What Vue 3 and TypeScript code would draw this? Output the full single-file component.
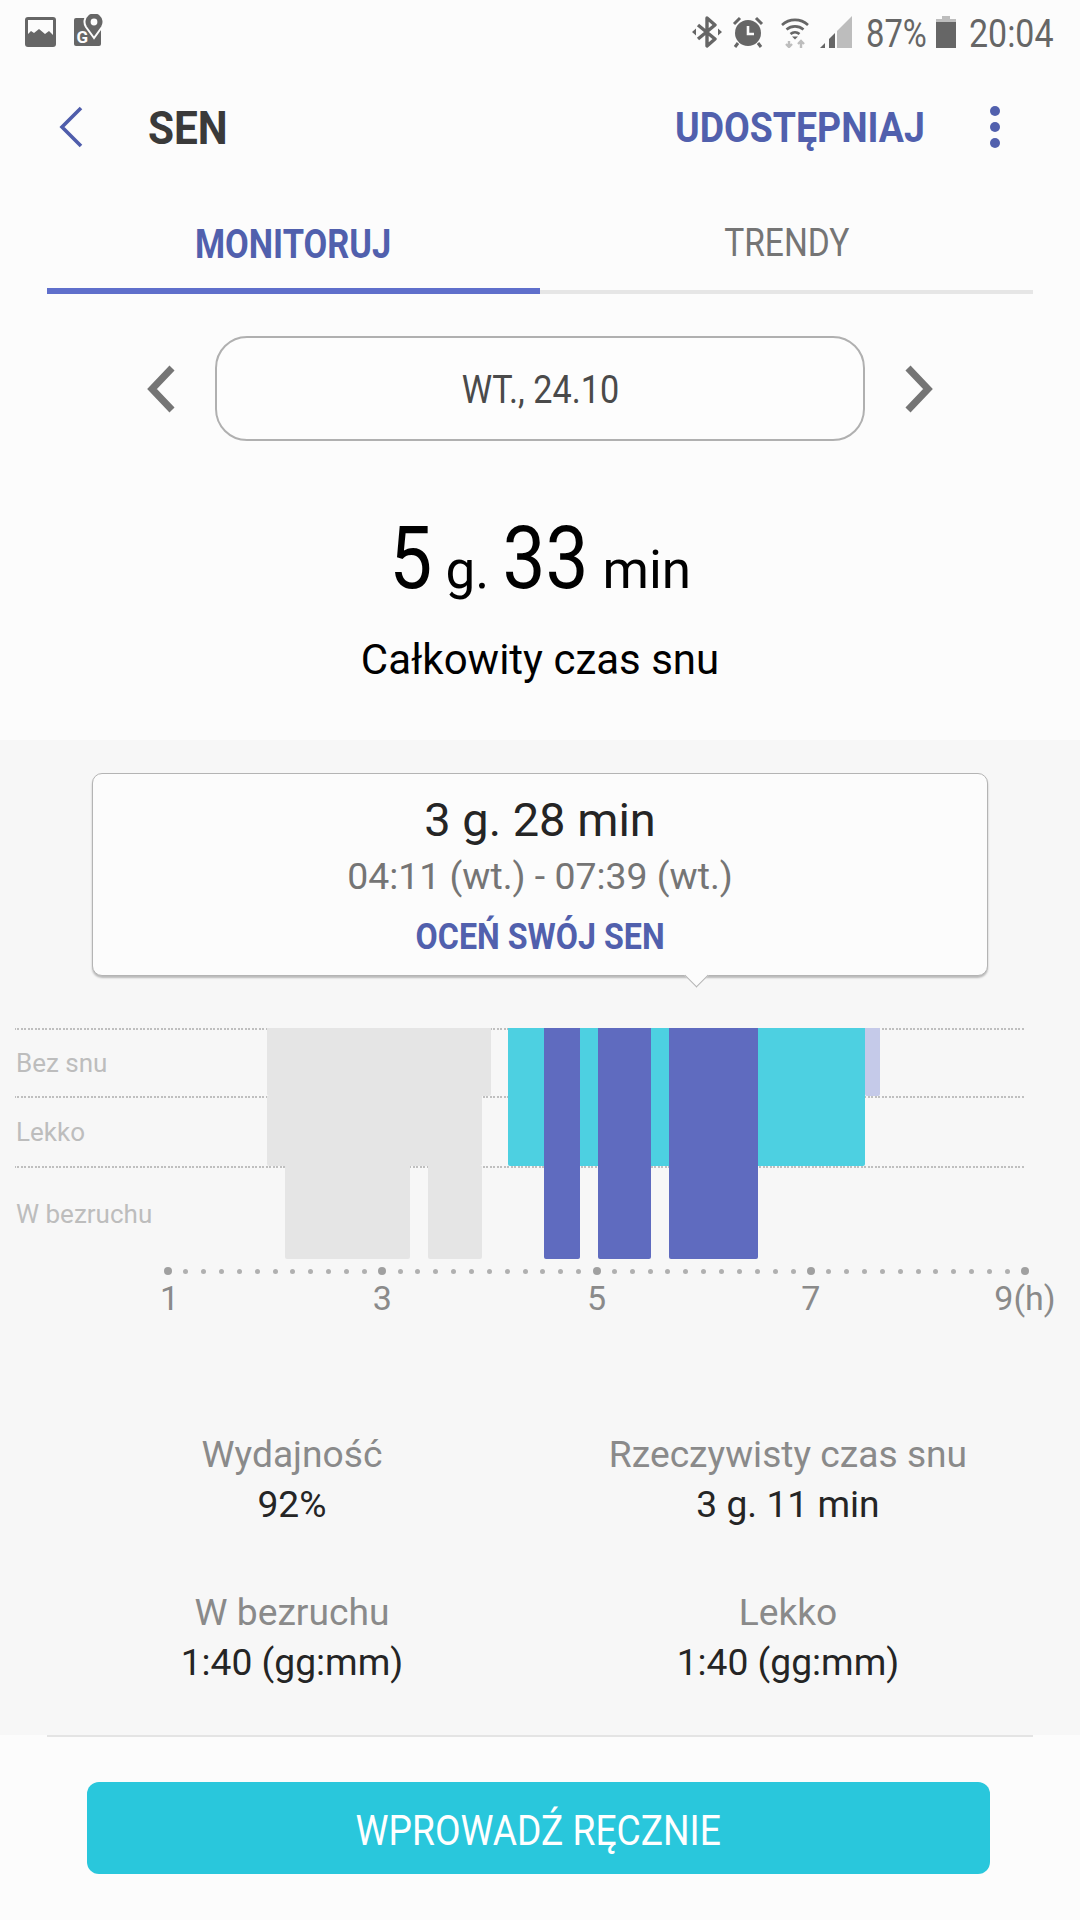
<script setup lang="ts">
interface Bar { x: number; w: number; y: number; h: number; color: string }

const grey = "#e5e5e5";
const teal = "#4dd0e1";
const indigo = "#5f6bbf";

// chart origin is x=15, y=1028 on the page
const bars: Bar[] = [
  { x: 252, w: 224, y: 0, h: 68, color: grey },
  { x: 252, w: 215, y: 68, h: 70, color: grey },
  { x: 270, w: 125, y: 138, h: 93, color: grey },
  { x: 413, w: 54, y: 138, h: 93, color: grey },
  { x: 493, w: 357, y: 0, h: 138, color: teal },
  { x: 850, w: 15, y: 0, h: 68, color: "#c5cae9" },
  { x: 529, w: 36, y: 0, h: 231, color: indigo },
  { x: 583, w: 53, y: 0, h: 231, color: indigo },
  { x: 654, w: 89, y: 0, h: 231, color: indigo },
];

const rows = [
  { label: "Bez snu", cls: "r1" },
  { label: "Lekko", cls: "r2" },
  { label: "W bezruchu", cls: "r3" },
];

const ticks = ["1", "3", "5", "7", "9(h)"];
const dots = Array.from({ length: 49 }, (_, i) => i);

const stats = [
  { label: "Wydajność", value: "92%" },
  { label: "Rzeczywisty czas snu", value: "3 g. 11 min" },
  { label: "W bezruchu", value: "1:40 (gg:mm)" },
  { label: "Lekko", value: "1:40 (gg:mm)" },
];

function barStyle(b: Bar) {
  return { left: b.x + "px", width: b.w + "px", top: b.y + "px", height: b.h + "px", background: b.color };
}
</script>

<template>
  <div class="page">
    <div class="status">
      <div class="status-left">
        <svg class="ic-image" width="31" height="30" viewBox="0 0 31 30">
          <rect width="31" height="30" rx="3" fill="#666" />
          <path d="M3 3h25v15l-4-4-4 3-6-5-5 4-3-2-3 3z" fill="#fcfcfc" />
        </svg>
        <svg class="ic-map" width="30" height="34" viewBox="0 0 30 34">
          <rect x="0" y="4" width="27" height="28" rx="2" fill="#666" />
          <path d="M20 24l-8-11a9.5 9.5 0 1 1 16 0z" fill="#666" stroke="#fcfcfc" stroke-width="2" />
          <circle cx="20" cy="8" r="3.4" fill="#fcfcfc" />
          <text x="2.5" y="29" class="ic-g">G</text>
        </svg>
      </div>
      <div class="status-right">
        <svg class="ic-bt" width="30" height="32" viewBox="0 0 30 32">
          <path d="M6 9l17 14-8 7V2l8 7L6 23" fill="none" stroke="#666" stroke-width="3.4" stroke-linejoin="round" />
          <path d="M0 16l4-3.5v7zM30 16l-4-3.5v7z" fill="#666" />
        </svg>
        <svg class="ic-alarm" width="32" height="32" viewBox="0 0 32 32">
          <circle cx="16" cy="17" r="13" fill="#666" />
          <path d="M16 10v8h6" fill="none" stroke="#fcfcfc" stroke-width="2.6" />
          <path d="M2 8l6-6M30 8l-6-6M6 27l-3 4M26 27l3 4" stroke="#666" stroke-width="3" />
        </svg>
        <svg class="ic-wifi" width="28" height="32" viewBox="0 0 28 32">
          <path d="M1 9a19 19 0 0 1 26 0M5.5 13.5a13 13 0 0 1 17 0M9.5 18a7 7 0 0 1 9 0" fill="none" stroke="#666" stroke-width="2.6" />
          <path d="M11 20.5h6l-3 3z" fill="#666" />
          <path d="M8 25v6M5 28l3 3 3-3M20 32v-7M17 28l3-3 3 3" fill="none" stroke="#bdbdbd" stroke-width="2.4" />
        </svg>
        <svg class="ic-signal" width="32" height="32" viewBox="0 0 32 32">
          <path d="M0 32l5-5v5z" fill="#666" />
          <path d="M9 32V23l6-6v15z" fill="#666" />
          <path d="M17 32V15L32 0v32z" fill="#bdbdbd" />
        </svg>
        <span class="st-text pct">87%</span>
        <svg class="ic-batt" width="20" height="32" viewBox="0 0 20 32">
          <path d="M6 0h8v3H6z" fill="#bdbdbd" />
          <path d="M0 3h20v3H0z" fill="#bdbdbd" />
          <rect y="6" width="20" height="26" fill="#666" />
        </svg>
        <span class="st-text clock">20:04</span>
      </div>
    </div>

    <div class="header">
      <svg class="back" width="24" height="42" viewBox="0 0 24 42">
        <path d="M22 2L3 21l19 19" fill="none" stroke="#4f5dab" stroke-width="3.6" />
      </svg>
      <span class="title">SEN</span>
      <span class="share">UDOSTĘPNIAJ</span>
      <span class="more"><i></i><i></i><i></i></span>
    </div>

    <div class="tabs">
      <div class="tab active"><span>MONITORUJ</span></div>
      <div class="tab"><span>TRENDY</span></div>
    </div>

    <div class="date-row">
      <svg width="30" height="48" viewBox="0 0 30 48">
        <path d="M26 3L6 24l20 21" fill="none" stroke="#757575" stroke-width="7" />
      </svg>
      <div class="date-pill"><span>WT., 24.10</span></div>
      <svg width="30" height="48" viewBox="0 0 30 48">
        <path d="M4 3l20 21L4 45" fill="none" stroke="#757575" stroke-width="7" />
      </svg>
    </div>

    <div class="total">
      <div class="total-value"><b class="one">5</b> g. <b class="two">33</b> min</div>
      <div class="total-label">Całkowity czas snu</div>
    </div>

    <div class="detail">
      <div class="popup">
        <div class="popup-time">3 g. 28 min</div>
        <div class="popup-range">04:11 (wt.) - 07:39 (wt.)</div>
        <div class="popup-link"><span>OCEŃ SWÓJ SEN</span></div>
      </div>

      <div class="chart">
        <div v-for="r in rows" :key="r.label" class="row" :class="r.cls">{{ r.label }}</div>
        <div v-for="(b, i) in bars" :key="i" class="bar" :style="barStyle(b)"></div>
      </div>
      <div class="axis">
        <div v-for="d in dots" :key="d" class="dot-cell">
          <span class="dot" :class="{ big: d % 12 === 0 }"></span>
        </div>
      </div>
      <div class="ticks">
        <span v-for="t in ticks" :key="t" class="tick"><em>{{ t }}</em></span>
      </div>

      <div class="stats">
        <div v-for="s in stats" :key="s.label + s.value" class="stat">
          <div class="stat-label">{{ s.label }}</div>
          <div class="stat-value">{{ s.value }}</div>
        </div>
      </div>
    </div>

    <div class="footer">
      <div class="manual"><span>WPROWADŹ RĘCZNIE</span></div>
    </div>
  </div>
</template>

<style scoped>
.page {
  width: 1080px;
  height: 1920px;
  overflow: hidden;
  background: #fcfcfc;
  font-family: Roboto, "Liberation Sans", sans-serif;
  display: flex;
  flex-direction: column;
}

.status {
  height: 66px;
  flex: none;
  display: flex;
  justify-content: space-between;
  align-items: flex-start;
  padding: 14px 27px 0 25px;
  box-sizing: border-box;
}
.status-left, .status-right { display: flex; align-items: flex-start; }
.status-left svg.ic-image { margin-top: 3px; }
.ic-map { margin-left: 18px; }
.ic-g { font: 700 17px Roboto, sans-serif; fill: #fcfcfc; }
.status-right svg { margin-top: 2px; display: block; }
.ic-alarm { margin-left: 10px; }
.ic-wifi { margin-left: 17px; }
.ic-signal { margin-left: 11px; }
.ic-batt { margin-left: 9px; }
.st-text {
  color: #666;
  font-size: 39px;
  line-height: 38px;
  margin-top: 1px;
  display: inline-block;
  transform: scaleX(0.84);
  transform-origin: left center;
}
.pct { margin-left: 14px; width: 61px; }
.clock { margin-left: 13px; width: 84px; white-space: nowrap; transform: scaleX(0.87); }

.header {
  height: 122px;
  flex: none;
  display: flex;
  align-items: center;
  padding: 0 47px 0 59px;
}
.title {
  margin-left: 65px;
  font-size: 47px;
  font-weight: 700;
  color: #3a3a3a;
  transform: scaleX(0.9);
  transform-origin: left center;
}
.share {
  margin-left: auto;
  width: 250px;
  white-space: nowrap;
  font-size: 43px;
  font-weight: 700;
  color: #5160ad;
  transform: scaleX(0.87);
  transform-origin: left center;
}
.more {
  display: flex;
  flex-direction: column;
  gap: 6px;
  margin-left: 65px;
  margin-right: 33px;
}
.more i { display: block; width: 10px; height: 10px; border-radius: 50%; background: #5160ad; }

.tabs {
  height: 106px;
  flex: none;
  display: flex;
  margin: 0 47px;
}
.tab {
  flex: 1;
  display: flex;
  align-items: center;
  justify-content: center;
  box-sizing: border-box;
  border-bottom: 4px solid #e6e6e6;
  padding-top: 8px;
  font-size: 39px;
  color: #757575;
}
.tab span { display: inline-block; transform: scaleX(0.86); white-space: nowrap; }
.tab.active {
  border-bottom: 6px solid #5f6fcb;
  color: #5160ad;
  font-size: 40px;
  font-weight: 700;
  padding-top: 13px;
}

.date-row {
  flex: none;
  display: flex;
  align-items: center;
  justify-content: center;
  gap: 39px;
  margin-top: 42px;
  height: 105px;
}
.date-pill {
  width: 650px;
  height: 105px;
  box-sizing: border-box;
  border: 2px solid #b0b0b0;
  border-radius: 32px;
  background: #fdfdfd;
  display: flex;
  align-items: center;
  justify-content: center;
  padding-top: 3px;
  font-size: 38px;
  color: #4a4a4a;
}
.date-pill span { display: inline-block; transform: scaleX(0.9); }

.total {
  height: 299px;
  flex: none;
  text-align: center;
  color: #000;
}
.total-value {
  margin-top: 62px;
  font-size: 53px;
  line-height: 110px;
}
.total-value b { display: inline-block; font-size: 88px; font-weight: 400; transform: scaleX(0.87); }
.total-value b.one { margin: 0 -3px; }
.total-value b.two { margin: 0 -6px; }
.total-label {
  margin-top: 10px;
  font-size: 42px;
  line-height: 50px;
}

.detail {
  height: 995px;
  flex: none;
  box-sizing: border-box;
  background: #f7f7f7;
  padding-top: 33px;
  border-bottom: 1px solid transparent;
}
.popup {
  position: relative;
  width: 896px;
  height: 203px;
  margin-left: 92px;
  box-sizing: border-box;
  background: #fcfcfc;
  border: 1px solid #b4b4b4;
  border-radius: 10px;
  box-shadow: 0 2px 2px rgba(0, 0, 0, 0.25);
  text-align: center;
  padding-top: 19px;
}
.popup::after {
  content: "";
  position: absolute;
  left: 595px;
  bottom: -9px;
  width: 16px;
  height: 16px;
  background: #fcfcfc;
  border-right: 1px solid #b4b4b4;
  border-bottom: 1px solid #b4b4b4;
  transform: rotate(45deg);
}
.popup-time { font-size: 47px; line-height: 54px; color: #252525; }
.popup-range { font-size: 37.4px; line-height: 50px; margin-top: 4px; color: #757575; }
.popup-link { font-size: 36px; line-height: 50px; margin-top: 11px; font-weight: 700; color: #5160ad; }
.popup-link span { display: inline-block; transform: scaleX(0.895); }

.chart {
  position: relative;
  width: 1010px;
  margin: 52px 0 0 15px;
}
.row {
  box-sizing: border-box;
  background-image: repeating-linear-gradient(90deg, #bfbfbf 0 2px, transparent 2px 3.5px);
  background-size: 100% 2px;
  background-repeat: no-repeat;
  background-position: left -1px top;
  display: flex;
  align-items: center;
  padding-left: 1px;
  padding-top: 2px;
  font-size: 26px;
  color: #bdbdbd;
}
.row.r1 { height: 68px; }
.row.r2 { height: 70px; }
.row.r3 { height: 93px; }
.bar { position: absolute; border-radius: 0 0 2px 2px; }

.axis {
  display: flex;
  width: 875px;
  margin: 4px 0 0 159px;
  height: 16px;
  align-items: center;
}
.dot-cell { flex: 1; display: flex; align-items: center; justify-content: center; }
.dot { display: block; width: 5px; height: 5px; border-radius: 50%; background: #b0b0b0; }
.dot.big { width: 8px; height: 8px; background: #a0a0a0; }

.ticks {
  display: flex;
  justify-content: space-between;
  width: 857px;
  margin: -3px 0 0 168px;
}
.tick { width: 0; display: flex; justify-content: center; }
.tick em { font-style: normal; font-size: 34px; line-height: 44px; color: #8a8a8a; white-space: nowrap; }
.tick:first-child em { margin-left: 3px; }

.stats {
  display: grid;
  grid-template-columns: 1fr 1fr;
  row-gap: 58px;
  padding: 0 44px;
  margin-top: 109px;
  text-align: center;
}
.stat-label { font-size: 37.2px; line-height: 50px; color: #8a8a8a; }
.stat-value { font-size: 37.2px; line-height: 50px; color: #252525; }

.footer {
  flex: 1;
  position: relative;
  padding: 47px 90px 0 87px;
}
.footer::before {
  content: "";
  position: absolute;
  left: 47px;
  right: 47px;
  top: 0;
  height: 2px;
  background: #e4e4e4;
}
.manual {
  height: 92px;
  border-radius: 12px;
  background: #29c7dc;
  color: #fff;
  display: flex;
  align-items: center;
  justify-content: center;
  padding-top: 4px;
  box-sizing: border-box;
  font-size: 43px;
  font-weight: 400;
}
.manual span { display: inline-block; transform: scaleX(0.865); white-space: nowrap; }
</style>
